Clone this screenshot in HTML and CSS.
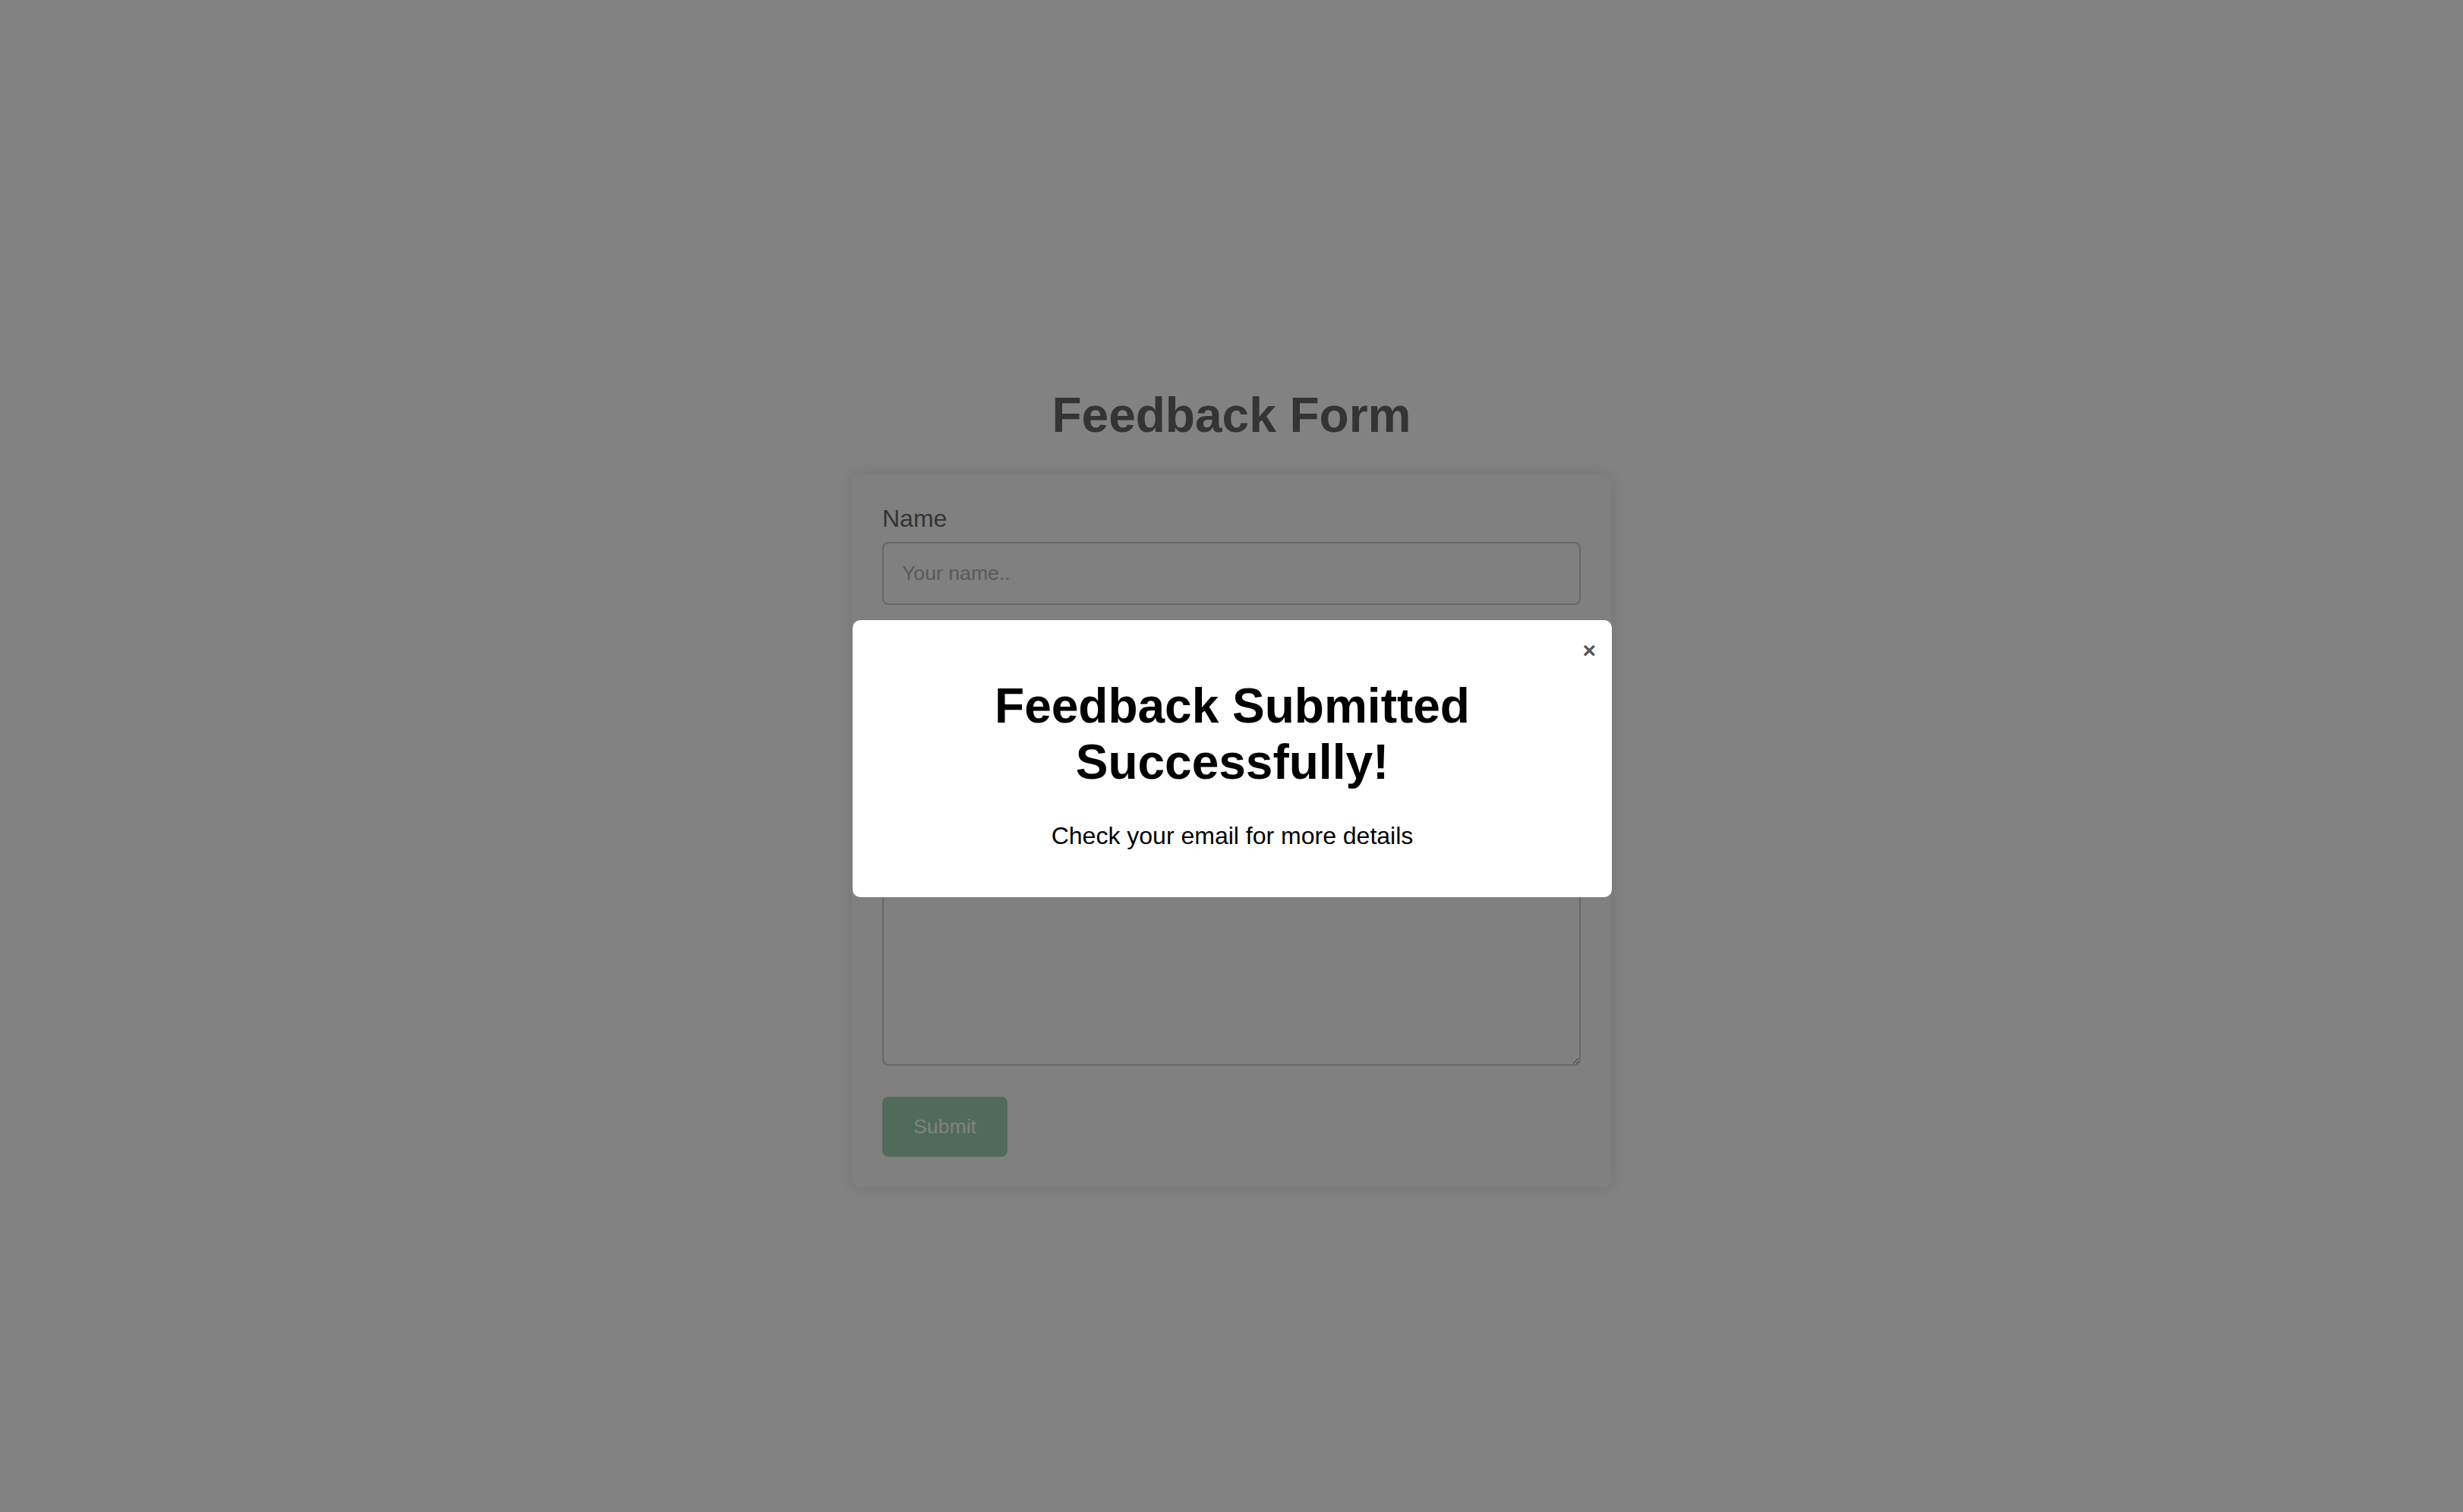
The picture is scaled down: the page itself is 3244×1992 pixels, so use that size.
FILE: index.html
```html
<!DOCTYPE html>
<html lang="en">
<head>
<meta charset="utf-8">
<title>Feedback Form</title>
<link rel="stylesheet" href="styles.css">
</head>
<body>
<main class="page">
  <h1 class="page-title">Feedback Form</h1>
  <form class="card">
    <label class="field-label" for="name">Name</label>
    <input class="field-input" id="name" type="text" placeholder="Your name..">
    <label class="field-label" for="email">Email</label>
    <input class="field-input" id="email" type="email" placeholder="Your email..">
    <label class="field-label" for="feedback">Feedback</label>
    <textarea class="field-textarea" id="feedback" placeholder="Write something.."></textarea>
    <button class="submit-btn" type="button">Submit</button>
  </form>
</main>
<div class="overlay">
  <div class="modal">
    <span class="modal-close">&times;</span>
    <h1 class="modal-title">Feedback Submitted Successfully!</h1>
    <p class="modal-text">Check your email for more details</p>
  </div>
</div>
</body>
</html>
```
FILE: styles.css
```css
html, body {
  margin: 0;
  padding: 0;
}
body {
  background: #ffffff;
  font-family: "Liberation Sans", Arial, Helvetica, sans-serif;
  min-height: 100vh;
}
.page {
  width: 1000px;
  margin: 0 auto;
  padding-top: 510px;
}
.page-title {
  margin: 0 0 41px;
  text-align: center;
  font-size: 64px;
  font-weight: bold;
  line-height: normal;
  color: #666666;
}
.card {
  background: #fbfbfb;
  border-radius: 10px;
  box-shadow: 0 0 20px rgba(0, 0, 0, 0.12);
  padding: 40px;
}
.field-label {
  display: block;
  font-size: 32px;
  line-height: normal;
  color: #666666;
  margin-bottom: 12px;
}
.field-input,
.field-textarea {
  display: block;
  width: 100%;
  box-sizing: border-box;
  padding: 24px;
  border: 2px solid #cccccc;
  border-radius: 8px;
  font-family: "Liberation Sans", Arial, Helvetica, sans-serif;
  font-size: 26.67px;
  background: #fbfbfb;
  margin: 0 0 40px;
}
.field-input::placeholder,
.field-textarea::placeholder {
  color: #b0b0b0;
}
.field-textarea {
  height: 346px;
  margin-bottom: 41px;
  resize: vertical;
}
.submit-btn {
  display: block;
  background: #9ed2b0;
  color: #ffffff;
  border: none;
  border-radius: 8px;
  padding: 24px 41px;
  font-family: "Liberation Sans", Arial, Helvetica, sans-serif;
  font-size: 26.67px;
  line-height: normal;
}
.overlay {
  position: fixed;
  inset: 0;
  background: rgba(0, 0, 0, 0.49);
  display: flex;
  align-items: center;
  justify-content: center;
}
.modal {
  position: relative;
  width: 1000px;
  box-sizing: border-box;
  margin-top: 6px;
  margin-left: 2px;
  background: #ffffff;
  border-radius: 10px;
  padding: 76px 40px 62px;
  text-align: center;
}
.modal-close {
  position: absolute;
  top: 25px;
  right: 21px;
  font-size: 30px;
  font-weight: bold;
  line-height: 1;
  color: #555555;
}
.modal-title {
  margin: 0 0 42px;
  font-size: 64px;
  font-weight: bold;
  line-height: normal;
  color: #000000;
}
.modal-text {
  margin: 0;
  font-size: 32px;
  line-height: normal;
  color: #000000;
}
```
